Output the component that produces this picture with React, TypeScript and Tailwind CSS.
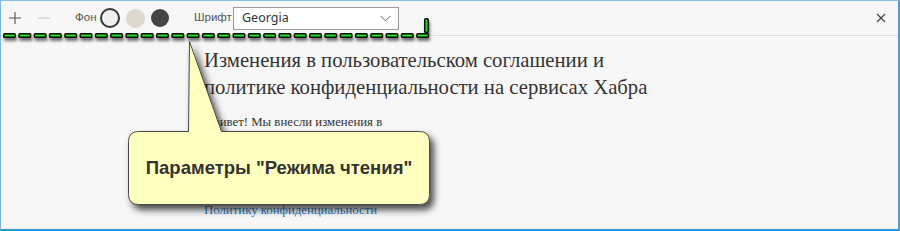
import React from "react";

function Dashes() {
  const items = [];
  for (let i = 0; i < 28; i++) {
    const x = 2 + i * 15.3;
    items.push(
      <g key={i}>
        <rect x={x} y={32} width={13} height={5} rx={1.5} fill="#111" />
        <rect x={x + 1.5} y={33.5} width={10} height={2} fill="#22dd22" />
      </g>
    );
  }
  return (
    <svg className="absolute left-0 top-0 pointer-events-none" width="900" height="60" viewBox="0 0 900 60">
      <defs>
        <filter id="dsh" x="-10%" y="-50%" width="120%" height="250%">
          <feDropShadow dx="1" dy="3" stdDeviation="1.6" floodColor="#000" floodOpacity="0.55" />
        </filter>
      </defs>
      <g filter="url(#dsh)">
        {items}
        <rect x={423} y={17} width={5} height={15} rx={1.5} fill="#111" />
        <rect x={424.5} y={18.5} width={2} height={12} fill="#22dd22" />
      </g>
    </svg>
  );
}

function Callout() {
  const d =
    "M137.5,130.5 L187.5,130.5 L188.5,40.5 L220.5,130.5 L418.5,130.5 Q428.5,130.5 428.5,140.5 L428.5,193.5 Q428.5,203.5 418.5,203.5 L137.5,203.5 Q127.5,203.5 127.5,193.5 L127.5,140.5 Q127.5,130.5 137.5,130.5 Z";
  return (
    <>
      <svg className="absolute left-0 top-0 pointer-events-none" width="900" height="231" viewBox="0 0 900 231">
        <defs>
          <filter id="csh" x="-10%" y="-10%" width="130%" height="140%">
            <feDropShadow dx="4" dy="5" stdDeviation="3.5" floodColor="#000" floodOpacity="0.7" />
          </filter>
        </defs>
        <path d={d} fill="#ffffc0" stroke="#4a4a4a" strokeWidth="1" filter="url(#csh)" />
      </svg>
      <div className="absolute left-[127px] top-[130px] w-[302px] h-[74px] flex items-center justify-center pointer-events-none">
        <span className="font-['Liberation_Sans',Arial,sans-serif] font-bold text-[18.5px] text-[#333] whitespace-nowrap">
          Параметры "Режима чтения"
        </span>
      </div>
    </>
  );
}

export default function App() {
  return (
    <div className="relative w-[900px] h-[231px] overflow-hidden bg-[#f7f7f7] border-t border-l border-r-2 border-b-2 border-t-[#86c0e6] border-l-[#7ab8e2] border-r-[#4aa0d8] border-b-[#2f92d2]">
      <div className="h-[35px] border-b border-[#dedede] flex items-center font-['Liberation_Sans',Arial,sans-serif] text-[11.5px] text-[#555]">
        <div className="w-[14px] ml-[7px] flex items-center justify-center">
          <svg width="14" height="14" viewBox="0 0 14 14">
            <path d="M7 1V13M1 7H13" stroke="#555" strokeWidth="1.1" />
          </svg>
        </div>
        <div className="w-[14px] ml-[15px] flex items-center justify-center">
          <svg width="14" height="14" viewBox="0 0 14 14">
            <path d="M1 7H13" stroke="#c8c8c8" strokeWidth="1.1" />
          </svg>
        </div>
        <span className="ml-[24px] w-[20px] whitespace-nowrap">Фон</span>
        <div className="ml-[5px] w-[20px] h-[20px] rounded-full border-[2.5px] border-[#333] bg-[#efefef]" />
        <div className="ml-[6px] w-[19px] h-[19px] rounded-full bg-[#ddd7cd]" />
        <div className="ml-[6px] w-[18px] h-[18px] rounded-full bg-[#444]" />
        <span className="ml-[25px] w-[35px] whitespace-nowrap">Шрифт</span>
        <div className="ml-[4px] w-[166px] h-[23px] border border-[#9a9a9a] bg-white flex items-center justify-between pl-[8px] pr-[7px] font-['Noto_Sans','Open_Sans',sans-serif] text-[12.5px] text-[#333]">
          <span>Georgia</span>
          <svg width="11" height="7" viewBox="0 0 11 7">
            <path d="M0.5 0.8L5.5 5.8L10.5 0.8" fill="none" stroke="#666" strokeWidth="1" />
          </svg>
        </div>
        <div className="ml-auto mr-[12px] flex items-center">
          <svg width="10" height="10" viewBox="0 0 10 10">
            <path d="M1 1L9 9M9 1L1 9" stroke="#444" strokeWidth="1.2" />
          </svg>
        </div>
      </div>
      <div className="pl-[203px] pt-[11px] font-['Liberation_Serif',Georgia,serif] text-[#333]">
        <div className="text-[20.7px] leading-[27px] whitespace-nowrap">
          <div>Изменения в пользовательском соглашении и</div>
          <div>политике конфиденциальности на сервисах Хабра</div>
        </div>
        <div className="mt-[12px] text-[12.8px] leading-[18px] whitespace-nowrap">Привет! Мы внесли изменения в</div>
        <div className="mt-[70px] text-[12.8px] leading-[18px] whitespace-nowrap text-[#2b7bc4]">Политику конфиденциальности</div>
      </div>
      <Dashes />
      <Callout />
    </div>
  );
}
